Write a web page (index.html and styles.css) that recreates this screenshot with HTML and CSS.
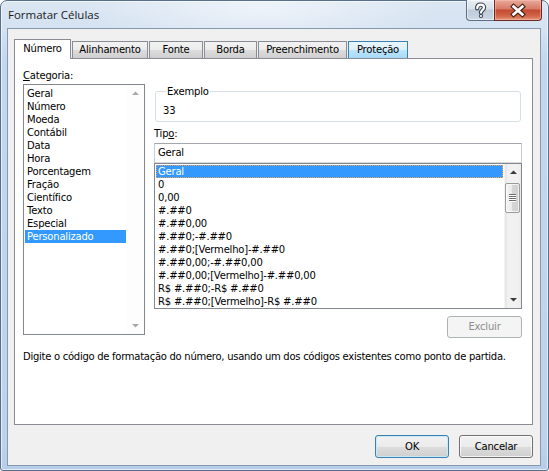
FILE: index.html
```html
<!DOCTYPE html>
<html lang="pt-BR">
<head>
<meta charset="utf-8">
<title>Formatar Células</title>
<link rel="stylesheet" href="styles.css">
</head>
<body>
<div class="window">
  <div class="titlebar">
    <span class="title">Formatar Células</span>
    <div class="caption-buttons">
      <div class="cap-btn help">
        <svg width="27" height="19" viewBox="0 0 27 19">
          <path d="M10.2 7.2 C10.2 4.6 11.8 3.6 13.6 3.6 C15.6 3.6 17 4.8 17 6.6 C17 8.9 14 9.2 14 11.6" fill="none" stroke="#3b4452" stroke-width="4.4" stroke-linecap="round"/>
          <circle cx="14" cy="15" r="2.1" fill="#3b4452"/>
          <path d="M10.2 7.2 C10.2 4.6 11.8 3.6 13.6 3.6 C15.6 3.6 17 4.8 17 6.6 C17 8.9 14 9.2 14 11.6" fill="none" stroke="#ffffff" stroke-width="2.2" stroke-linecap="round"/>
          <circle cx="14" cy="15" r="1.1" fill="#ffffff"/>
        </svg>
      </div>
      <div class="cap-btn close">
        <svg width="47" height="19" viewBox="0 0 47 19">
          <path d="M19 5.5 L28 13.5 M28 5.5 L19 13.5" fill="none" stroke="#4a1e17" stroke-width="5" stroke-linecap="square"/>
          <path d="M19 5.5 L28 13.5 M28 5.5 L19 13.5" fill="none" stroke="#ffffff" stroke-width="2.8" stroke-linecap="square"/>
        </svg>
      </div>
    </div>
  </div>
  <div class="client">
    <div class="tabs">
      <div class="tab active w-numero">Número</div>
      <div class="tab w-alin">Alinhamento</div>
      <div class="tab w-fonte">Fonte</div>
      <div class="tab w-borda">Borda</div>
      <div class="tab w-preen">Preenchimento</div>
      <div class="tab hover w-prot">Proteção</div>
    </div>
    <div class="panel">
      <div class="main-row">
        <div class="left-col">
          <div class="label"><u>C</u>ategoria:</div>
          <div class="listbox cat-list">
            <ul class="items">
              <li>Geral</li>
              <li>Número</li>
              <li>Moeda</li>
              <li>Contábil</li>
              <li>Data</li>
              <li>Hora</li>
              <li>Porcentagem</li>
              <li>Fração</li>
              <li>Científico</li>
              <li>Texto</li>
              <li>Especial</li>
              <li class="selected">Personalizado</li>
            </ul>
            <div class="vscroll disabled">
              <svg class="arrow" width="17" height="17" viewBox="0 0 17 17"><path d="M5 10 L8.5 6.5 L12 10 Z" fill="#a8a8a8"/></svg>
              <svg class="arrow" width="17" height="17" viewBox="0 0 17 17"><path d="M5 7 L8.5 10.5 L12 7 Z" fill="#a8a8a8"/></svg>
            </div>
          </div>
        </div>
        <div class="right-col">
          <fieldset class="sample">
            <legend>Exemplo</legend>
            <div class="sample-value">33</div>
          </fieldset>
          <div class="label tipo-label">Tip<u>o</u>:</div>
          <div class="textbox">Geral</div>
          <div class="listbox type-list">
            <ul class="items">
              <li class="selected focused">Geral</li>
              <li>0</li>
              <li>0,00</li>
              <li>#.##0</li>
              <li>#.##0,00</li>
              <li>#.##0;-#.##0</li>
              <li>#.##0;[Vermelho]-#.##0</li>
              <li>#.##0,00;-#.##0,00</li>
              <li>#.##0,00;[Vermelho]-#.##0,00</li>
              <li>R$ #.##0;-R$ #.##0</li>
              <li>R$ #.##0;[Vermelho]-R$ #.##0</li>
            </ul>
            <div class="vscroll">
              <svg class="arrow" width="17" height="17" viewBox="0 0 17 17"><path d="M5 10 L8.5 6.5 L12 10 Z" fill="#3a3a3a"/></svg>
              <div class="track">
                <div class="thumb">
                  <svg width="15" height="30" viewBox="0 0 15 30">
                    <path d="M4 11.5 H11 M4 13.5 H11 M4 15.5 H11 M4 17.5 H11" stroke="#6f6f6f" stroke-width="1"/>
                    <path d="M4 12.5 H11 M4 14.5 H11 M4 16.5 H11 M4 18.5 H11" stroke="#ffffff" stroke-width="1"/>
                  </svg>
                </div>
              </div>
              <svg class="arrow" width="17" height="17" viewBox="0 0 17 17"><path d="M5 7 L8.5 10.5 L12 7 Z" fill="#3a3a3a"/></svg>
            </div>
          </div>
          <div class="btn-row">
            <div class="btn disabled">Excluir</div>
          </div>
        </div>
      </div>
      <p class="desc">Digite o código de formatação do número, usando um dos códigos existentes como ponto de partida.</p>
    </div>
    <div class="dialog-buttons">
      <div class="btn default">OK</div>
      <div class="btn">Cancelar</div>
    </div>
  </div>
</div>
</body>
</html>
```
FILE: styles.css
```css
* { box-sizing: border-box; }

html, body {
  margin: 0;
  padding: 0;
}

body {
  width: 549px;
  height: 471px;
  overflow: hidden;
  font-family: "DejaVu Sans", Verdana, sans-serif;
  font-size: 10px;
  letter-spacing: -0.2px;
  color: #000;
  background: #ffffff;
}

.window {
  position: relative;
  width: 549px;
  height: 471px;
  border: 1px solid #566f8c;
  border-radius: 7px 7px 3px 3px;
  background:
    radial-gradient(ellipse 180px 40px at 260px 8px, rgba(255,255,255,0.55), rgba(255,255,255,0) 100%),
    linear-gradient(to bottom, #dbe6f3 0px, #d4e2f1 28px, #c3d7ed 60px, #bed3eb 440px, #b6cde8 471px);
  box-shadow: inset 0 0 0 1px rgba(255,255,255,0.6);
  display: flex;
  flex-direction: column;
}

.titlebar {
  height: 27px;
  flex: none;
  display: flex;
  align-items: center;
  padding-left: 7px;
  padding-bottom: 1px;
}

.title {
  font-family: "Open Sans", "Noto Sans", sans-serif;
  font-size: 11.5px;
  letter-spacing: 0;
  color: #1b1b1b;
}

.caption-buttons {
  position: absolute;
  top: -1px;
  right: 6px;
  display: flex;
}

.cap-btn {
  height: 21px;
  border: 1px solid #5d6f86;
  border-top: none;
  display: flex;
  align-items: center;
  justify-content: center;
}

.cap-btn svg { display: block; }

.cap-btn.help {
  width: 28px;
  border-radius: 0 0 0 4px;
  border-right: none;
  background: linear-gradient(to bottom, #e9eef4 0%, #d6dfe9 45%, #bfcbd9 50%, #cdd8e5 100%);
  box-shadow: inset 0 0 0 1px rgba(255,255,255,0.55);
}

.cap-btn.close {
  width: 48px;
  border-color: #6b2b22;
  border-radius: 0 0 4px 0;
  background: linear-gradient(to bottom, #e9a99b 0%, #d77a66 45%, #c24a33 50%, #d26548 80%, #e39a7e 100%);
  box-shadow: inset 0 0 0 1px rgba(255,200,190,0.45);
}

.client {
  flex: none;
  width: 534px;
  height: 438px;
  margin-left: 6px;
  background: #f0f0f0;
  border: 1px solid #8799af;
  padding: 10px 7px 0 6px;
  display: flex;
  flex-direction: column;
}

/* ---------- tabs ---------- */
.tabs {
  height: 19px;
  display: flex;
  align-items: flex-end;
  position: relative;
  z-index: 1;
}

.tab {
  height: 17px;
  border: 1px solid #898c95;
  border-bottom: none;
  margin-right: 1px;
  background: linear-gradient(to bottom, #f2f2f2 0%, #ebebeb 50%, #dddddd 50%, #cfcfcf 100%);
  display: flex;
  align-items: center;
  justify-content: center;
  padding-bottom: 1px;
  white-space: nowrap;
}

.tab.active {
  height: 20px;
  margin-bottom: -1px;
  background: #ffffff;
  padding-bottom: 3px;
}

.tab.hover {
  border-color: #3c7fb1;
  background: linear-gradient(to bottom, #eaf6fd 0%, #d9f0fc 50%, #bee6fd 50%, #a7d9f5 100%);
}

.w-numero { width: 57px; }
.w-alin { width: 76px; }
.w-fonte { width: 54px; }
.w-borda { width: 53px; }
.w-preen { width: 89px; }
.w-prot { width: 60px; }

/* ---------- panel ---------- */
.panel {
  width: 519px;
  height: 367px;
  flex: none;
  background: #ffffff;
  border: 1px solid #898c95;
  padding: 10px 10px 0 8px;
}

.main-row {
  display: flex;
  gap: 9px;
  align-items: flex-start;
}

.left-col {
  width: 122px;
  flex: none;
}

.right-col {
  width: 368px;
  flex: none;
  display: flex;
  flex-direction: column;
}

.label {
  line-height: 13px;
  height: 13px;
  margin-bottom: 2px;
  white-space: nowrap;
}

.label u { text-decoration-thickness: 1px; text-underline-offset: 1px; }

.listbox {
  border: 1px solid #828790;
  background: #ffffff;
  display: flex;
  overflow: hidden;
}

.items {
  list-style: none;
  margin: 0;
  padding: 1px;
  flex: 1;
  min-width: 0;
}

.items li {
  height: 13px;
  line-height: 13px;
  padding-left: 2px;
  white-space: nowrap;
}

.items li.selected {
  background: #3399ff;
  color: #ffffff;
}

.items li.focused {
  outline: 1px dotted #f0a050;
  outline-offset: -1px;
}

.cat-list { height: 251px; }

.cat-list .items { padding-top: 2px; }

.vscroll {
  width: 17px;
  flex: none;
  display: flex;
  flex-direction: column;
  justify-content: space-between;
}

.vscroll.disabled {
  background: #fdfdfd;
}

.vscroll .arrow { display: block; flex: none; }

/* ---------- right column ---------- */
.sample {
  margin: 16px 1px 0 1px;
  padding: 6px 6px 3px 7px;
  border: 1px solid #d5dfe5;
  border-radius: 3px;
  min-width: 0;
  height: 37px;
}

.sample legend {
  padding: 0 1px;
  margin-left: 3px;
  line-height: 13px;
}

.sample-value {
  line-height: 13px;
}

.tipo-label {
  margin-top: 5px;
  margin-bottom: 3px;
}

.textbox {
  height: 20px;
  border: 1px solid #abadb3;
  border-color: #a4a8ae #c8ccd3 #d6dbe2 #c8ccd3;
  line-height: 18px;
  padding-left: 3px;
}

.type-list {
  height: 146px;
}

.type-list .items {
  padding: 1px 1px 0 1px;
}

.type-list .vscroll {
  background: linear-gradient(to right, #e3e3e3 0px, #f1f1f1 3px, #f1f1f1 13px, #e8e8e8 17px);
  border-left: 1px solid #f4f4f4;
}

.track {
  flex: 1;
  padding: 2px 0 0 0;
}

.thumb {
  width: 15px;
  height: 30px;
  margin-left: 0;
  border: 1px solid #9b9b9b;
  border-radius: 2px;
  background: linear-gradient(to right, #f4f4f4 0%, #e9e9e9 50%, #d6d6d6 50%, #cfcfcf 100%);
  box-shadow: inset 0 0 0 1px rgba(255,255,255,0.7);
  overflow: hidden;
}

.thumb svg { display: block; margin: -1px 0 0 -1px; }

.btn-row {
  display: flex;
  justify-content: flex-end;
  margin-top: 7px;
}

.btn {
  width: 74px;
  height: 23px;
  border: 1px solid #707070;
  border-radius: 3px;
  background: linear-gradient(to bottom, #f2f2f2 0%, #ebebeb 50%, #dddddd 50%, #cfcfcf 100%);
  box-shadow: inset 0 0 0 1px rgba(255,255,255,0.75);
  display: flex;
  align-items: center;
  justify-content: center;
  padding-bottom: 1px;
}

.btn.disabled {
  width: 75px;
  height: 22px;
  border-color: #adb2b5;
  background: #f4f4f4;
  box-shadow: none;
  color: #8d8d8d;
}

.btn.default {
  border-color: #3c7fb1;
  box-shadow: inset 0 0 0 1px #c9e9fb;
}

.desc {
  margin: 12px 0 0 0;
  line-height: 13px;
  letter-spacing: -0.27px;
  white-space: nowrap;
}

.dialog-buttons {
  display: flex;
  justify-content: flex-end;
  gap: 10px;
  margin-top: 10px;
  padding-right: 0;
}
```
